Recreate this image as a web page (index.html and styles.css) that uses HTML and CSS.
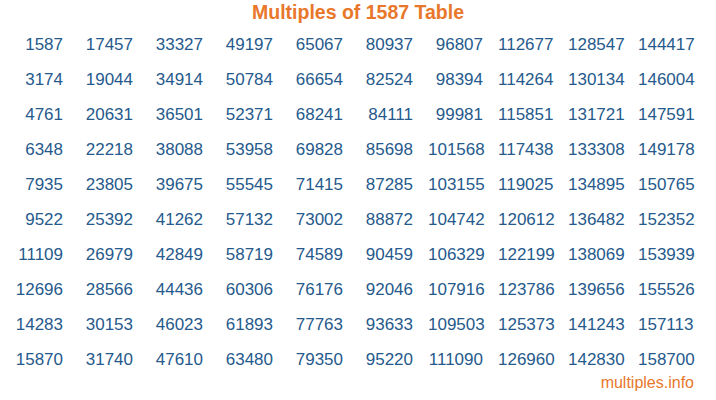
FILE: index.html
```html
<!DOCTYPE html>
<html lang="en">
<head>
<meta charset="utf-8">
<title>Multiples of 1587 Table</title>
<link rel="stylesheet" href="styles.css">
</head>
<body>
<div class="page">
  <h1 class="title">Multiples of 1587 Table</h1>
  <div class="grid">
    <span>1587</span><span>17457</span><span>33327</span><span>49197</span><span>65067</span><span>80937</span><span>96807</span><span>112677</span><span>128547</span><span>144417</span>
    <span>3174</span><span>19044</span><span>34914</span><span>50784</span><span>66654</span><span>82524</span><span>98394</span><span>114264</span><span>130134</span><span>146004</span>
    <span>4761</span><span>20631</span><span>36501</span><span>52371</span><span>68241</span><span>84111</span><span>99981</span><span>115851</span><span>131721</span><span>147591</span>
    <span>6348</span><span>22218</span><span>38088</span><span>53958</span><span>69828</span><span>85698</span><span>101568</span><span>117438</span><span>133308</span><span>149178</span>
    <span>7935</span><span>23805</span><span>39675</span><span>55545</span><span>71415</span><span>87285</span><span>103155</span><span>119025</span><span>134895</span><span>150765</span>
    <span>9522</span><span>25392</span><span>41262</span><span>57132</span><span>73002</span><span>88872</span><span>104742</span><span>120612</span><span>136482</span><span>152352</span>
    <span>11109</span><span>26979</span><span>42849</span><span>58719</span><span>74589</span><span>90459</span><span>106329</span><span>122199</span><span>138069</span><span>153939</span>
    <span>12696</span><span>28566</span><span>44436</span><span>60306</span><span>76176</span><span>92046</span><span>107916</span><span>123786</span><span>139656</span><span>155526</span>
    <span>14283</span><span>30153</span><span>46023</span><span>61893</span><span>77763</span><span>93633</span><span>109503</span><span>125373</span><span>141243</span><span>157113</span>
    <span>15870</span><span>31740</span><span>47610</span><span>63480</span><span>79350</span><span>95220</span><span>111090</span><span>126960</span><span>142830</span><span>158700</span>
  </div>
  <div class="footer">multiples.info</div>
</div>
</body>
</html>
```
FILE: styles.css
```css
html, body {
  margin: 0;
  padding: 0;
  background: #ffffff;
}

.page {
  width: 716px;
  height: 400px;
  font-family: "Liberation Sans", Arial, sans-serif;
}

.title {
  margin: 0;
  font-size: 19.5px;
  line-height: 24px;
  font-weight: bold;
  text-align: center;
  color: #e8772b;
}

.grid {
  margin-top: 3px;
  display: grid;
  grid-template-columns: repeat(10, 70px);
  grid-auto-rows: 35px;
  justify-content: center;
  font-size: 17px;
  line-height: 35px;
  color: #265a8c;
}

.grid span {
  text-align: right;
  padding-right: 15px;
}

.footer {
  font-size: 16px;
  line-height: 12px;
  text-align: right;
  padding-right: 22px;
  color: #e8772b;
}
```
